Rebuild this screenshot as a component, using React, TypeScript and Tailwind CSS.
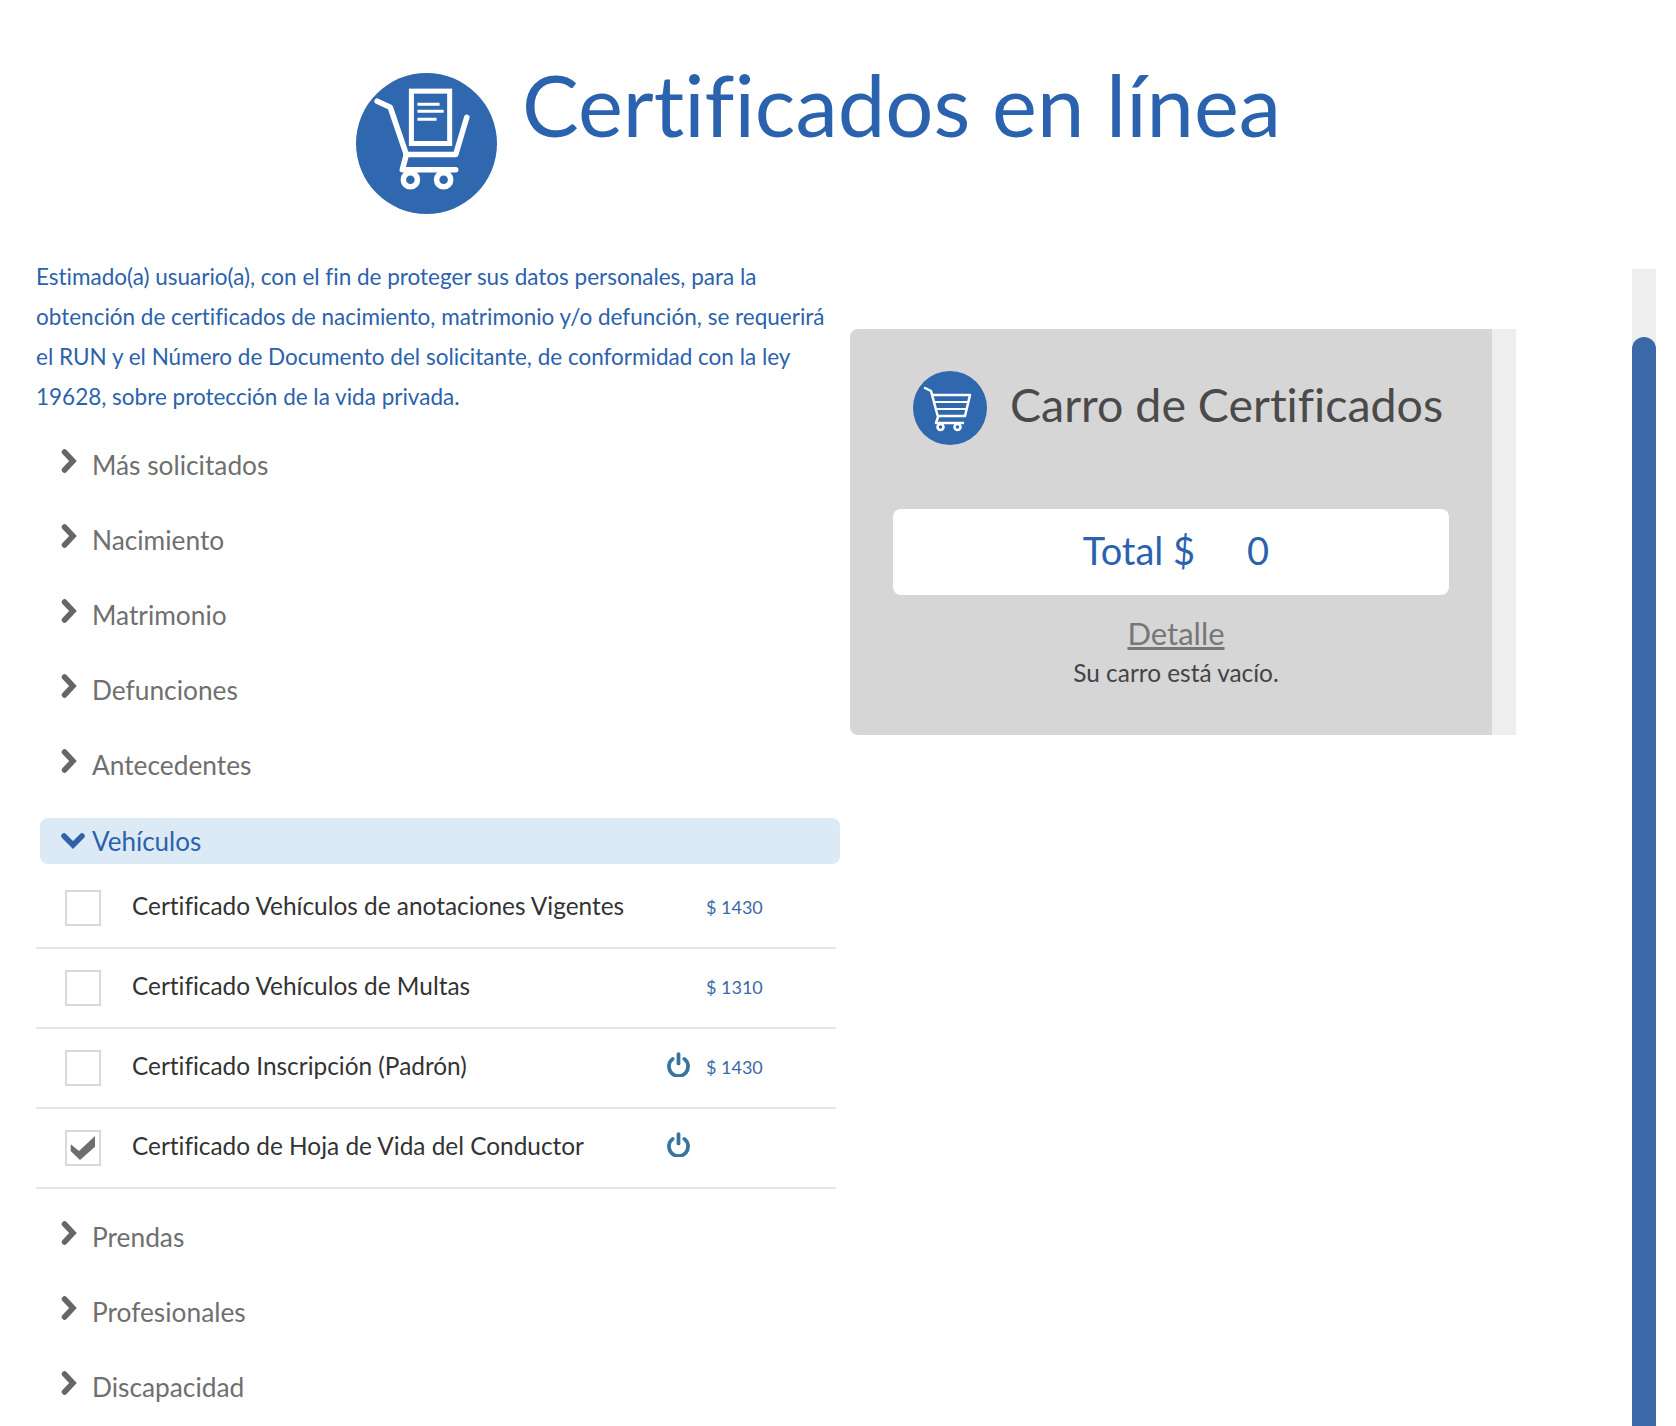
function BigCartIcon() {
  return (
    <svg viewBox="0 0 140 140" className="w-[141px] h-[141px] shrink-0">
      <circle cx="70" cy="70" r="70" fill="#2f68ae" />
      <g fill="none" stroke="#fff" strokeWidth="5" strokeLinecap="round" strokeLinejoin="round">
        <rect x="55" y="18" width="38" height="52" strokeLinecap="butt" strokeLinejoin="miter" />
        <path d="M21 28l13 6 16 47h49l11-37" strokeWidth="5.5" />
        <path d="M50 81l-4 15h53" strokeWidth="5.5" />
        <circle cx="54" cy="106" r="7" strokeWidth="5.5" />
        <circle cx="87" cy="106" r="7" strokeWidth="5.5" />
        <path d="M61 31h22M61 38h26M61 46h19" strokeWidth="3" strokeLinecap="butt" />
      </g>
    </svg>
  );
}

function SmallCartIcon() {
  return (
    <svg viewBox="0 0 74 74" className="w-[74px] h-[74px] shrink-0">
      <circle cx="37" cy="37" r="37" fill="#2f68ae" />
      <g fill="none" stroke="#fff" strokeWidth="2.5" strokeLinecap="round" strokeLinejoin="round">
        <path d="M12 17l6 3 7 26-2 6h27" />
        <path d="M20 24h37l-5 21H26" />
        <path d="M22 31h33M24 38h29" strokeWidth="2.2" />
        <circle cx="27.5" cy="56" r="3" />
        <circle cx="44.5" cy="56" r="3" />
      </g>
    </svg>
  );
}

function PowerIcon() {
  return (
    <svg viewBox="0 0 24 24" className="w-[25px] h-[25px]">
      <g fill="none" stroke="#38749f" strokeWidth="3.6" strokeLinecap="round">
        <path d="M6.4 6.6a9.2 9.2 0 1 0 11.2 0" />
        <path d="M12 2v9" />
      </g>
    </svg>
  );
}

function Section({ label }: { label: string }) {
  return (
    <div className="h-[75px] pl-[25px] flex items-start gap-[15px] text-[#6f6f6f]">
      <svg viewBox="0 0 16 24" className="w-[16px] h-[24px] mt-[6px] shrink-0">
        <path d="M3.5 3l8.5 9-8.5 9" fill="none" stroke="#666" strokeWidth="5.5" strokeLinecap="round" strokeLinejoin="miter" />
      </svg>
      <span className="text-[26.3px] leading-[36px] mt-[4px]">{label}</span>
    </div>
  );
}

function CertRow({ label, price, power, checked }: { label: string; price?: string; power?: boolean; checked?: boolean }) {
  return (
    <div className="h-[80px] w-[800px] flex items-center border-b-2 border-[#e6e6e6] pl-[29px]">
      <div className="w-[36px] h-[36px] border-2 border-[#d9d9d9] flex items-center justify-center shrink-0">
        {checked && (
          <svg viewBox="0 0 32 32" className="w-full h-full">
            <path d="M3.7 12.3L12 19 28 4V14.7L13 28 3.7 19z" fill="#6e6e6e" />
          </svg>
        )}
      </div>
      <div className="ml-[31px] w-[526px] text-[24.4px] text-[#333] -mt-[3px]">{label}</div>
      <div className="w-[40px] flex justify-center -mt-[7px]">{power && <PowerIcon />}</div>
      <div className="ml-[8px] -mt-[1px] text-[18px] text-[#3b68a8]">{price}</div>
    </div>
  );
}

export default function App() {
  return (
    <div className="h-[1426px] overflow-hidden bg-white flex flex-col font-['Lato',sans-serif] [font-variant-ligatures:none]">
      <div className="h-[257px] shrink-0 flex items-start pl-[356px] pt-[73px] gap-[25px]">
        <BigCartIcon />
        <h1 className="text-[85px] leading-[100px] -mt-[19px] text-[#2b62ad]">Certificados en línea</h1>
      </div>

      <div className="flex flex-1 min-h-0">
        <div className="w-[850px] pl-[36px] shrink-0">
          <p className="w-[800px] text-[22.5px] leading-[40px] text-[#2b62ad]">
            Estimado(a) usuario(a), con el fin de proteger sus datos personales, para la
            obtención de certificados de nacimiento, matrimonio y/o defunción, se requerirá
            el RUN y el Número de Documento del solicitante, de conformidad con la ley
            19628, sobre protección de la vida privada.
          </p>
          <div className="mt-[26px]">
            <Section label="Más solicitados" />
            <Section label="Nacimiento" />
            <Section label="Matrimonio" />
            <Section label="Defunciones" />
            <Section label="Antecedentes" />
          </div>
          <div className="ml-[4px] w-[800px] h-[46px] rounded-lg bg-[#dceaf6] flex items-center pl-[21px] gap-[7px] text-[#2b62ad]">
            <svg viewBox="0 0 24 16" className="w-[24px] h-[16px] shrink-0">
              <path d="M3 3l9 9 9-9" fill="none" stroke="#2f62a8" strokeWidth="5.5" strokeLinecap="round" />
            </svg>
            <span className="text-[26px]">Vehículos</span>
          </div>
          <div className="mt-[5px]">
            <CertRow label="Certificado Vehículos de anotaciones Vigentes" price="$ 1430" />
            <CertRow label="Certificado Vehículos de Multas" price="$ 1310" />
            <CertRow label="Certificado Inscripción (Padrón)" price="$ 1430" power />
            <CertRow label="Certificado de Hoja de Vida del Conductor" power checked />
          </div>
          <div className="mt-[26px]">
            <Section label="Prendas" />
            <Section label="Profesionales" />
            <Section label="Discapacidad" />
          </div>
        </div>

        <div className="mt-[72px] h-[406px] w-[666px] flex shrink-0">
          <div className="w-[642px] shrink-0 bg-[#d6d6d6] rounded-l-lg px-[43px] pt-[42px] flex flex-col items-center">
            <div className="flex items-center gap-[23px] whitespace-nowrap self-start ml-[20px]">
              <SmallCartIcon />
              <span className="text-[46.5px] leading-[60px] mb-[8px] text-[#4a4a4a]">Carro de Certificados</span>
            </div>
            <div className="mt-[64px] w-full h-[86px] pb-[4px] bg-white rounded-lg flex items-center justify-center gap-[52px] text-[38px] text-[#2b62ad]">
              <span className="ml-[10px]">Total $</span>
              <span>0</span>
            </div>
            <div className="mt-[19px] ml-[10px] text-[31px] leading-[38px] underline text-[#777]">Detalle</div>
            <div className="mt-[4px] ml-[10px] text-[24.4px] leading-[34px] text-[#444]">Su carro está vacío.</div>
          </div>
          <div className="w-[24px] bg-[#eeeeee]" />
        </div>

        <div className="ml-auto mr-[20px] mt-[12px] w-[24px] bg-[#eeeeee] pt-[68px] flex">
          <div className="flex-1 bg-[#3b68a8] rounded-t-full" />
        </div>
      </div>
    </div>
  );
}
